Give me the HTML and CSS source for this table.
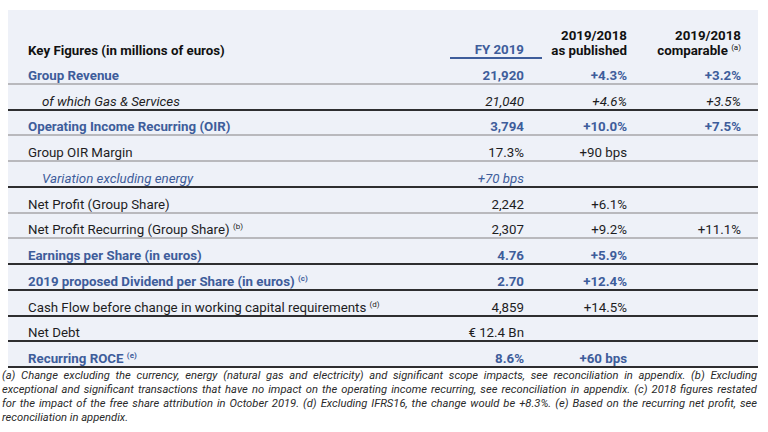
FILE: index.html
```html
<!DOCTYPE html>
<html lang="en">
<head>
<meta charset="utf-8">
<title>Key Figures</title>
<link rel="stylesheet" href="styles.css">
</head>
<body>
<div class="page">
  <div class="kf">
    <div class="row head">
      <div class="c lbl">Key Figures (in millions of euros)</div>
      <div class="c num fy">FY 2019</div>
      <div class="c num">2019/2018<br>as published</div>
      <div class="c num">2019/2018<br>comparable <sup>(a)</sup></div>
    </div>
    <div class="row blue b grey">
      <div class="c lbl">Group Revenue</div>
      <div class="c num">21,920</div>
      <div class="c num">+4.3%</div>
      <div class="c num">+3.2%</div>
    </div>
    <div class="row it dark">
      <div class="c lbl sub">of which Gas &amp; Services</div>
      <div class="c num">21,040</div>
      <div class="c num">+4.6%</div>
      <div class="c num">+3.5%</div>
    </div>
    <div class="row blue b grey">
      <div class="c lbl">Operating Income Recurring (OIR)</div>
      <div class="c num">3,794</div>
      <div class="c num">+10.0%</div>
      <div class="c num">+7.5%</div>
    </div>
    <div class="row grey">
      <div class="c lbl">Group OIR Margin</div>
      <div class="c num">17.3%</div>
      <div class="c num">+90 bps</div>
      <div class="c num"></div>
    </div>
    <div class="row blue it dark">
      <div class="c lbl sub">Variation excluding energy</div>
      <div class="c num">+70 bps</div>
      <div class="c num"></div>
      <div class="c num"></div>
    </div>
    <div class="row grey">
      <div class="c lbl">Net Profit (Group Share)</div>
      <div class="c num">2,242</div>
      <div class="c num">+6.1%</div>
      <div class="c num"></div>
    </div>
    <div class="row grey">
      <div class="c lbl">Net Profit Recurring (Group Share) <sup>(b)</sup></div>
      <div class="c num">2,307</div>
      <div class="c num">+9.2%</div>
      <div class="c num">+11.1%</div>
    </div>
    <div class="row blue b dark">
      <div class="c lbl">Earnings per Share (in euros)</div>
      <div class="c num">4.76</div>
      <div class="c num">+5.9%</div>
      <div class="c num"></div>
    </div>
    <div class="row blue b dark">
      <div class="c lbl">2019 proposed Dividend per Share (in euros) <sup>(c)</sup></div>
      <div class="c num">2.70</div>
      <div class="c num">+12.4%</div>
      <div class="c num"></div>
    </div>
    <div class="row dark">
      <div class="c lbl">Cash Flow before change in working capital requirements <sup>(d)</sup></div>
      <div class="c num">4,859</div>
      <div class="c num">+14.5%</div>
      <div class="c num"></div>
    </div>
    <div class="row dark">
      <div class="c lbl">Net Debt</div>
      <div class="c num">€ 12.4 Bn</div>
      <div class="c num"></div>
      <div class="c num"></div>
    </div>
    <div class="row blue b dark">
      <div class="c lbl">Recurring ROCE <sup>(e)</sup></div>
      <div class="c num">8.6%</div>
      <div class="c num">+60 bps</div>
      <div class="c num"></div>
    </div>
  </div>
  <div class="notes">
    <span class="ln">(a) Change excluding the currency, energy (natural gas and electricity) and significant scope impacts, see reconciliation in appendix. (b) Excluding</span>
    <span class="ln">exceptional and significant transactions that have no impact on the operating income recurring, see reconciliation in appendix. (c) 2018 figures restated</span>
    <span class="ln">for the impact of the free share attribution in October 2019. (d) Excluding IFRS16, the change would be +8.3%. (e) Based on the recurring net profit, see</span>
    <span class="ln last">reconciliation in appendix.</span>
  </div>
</div>
</body>
</html>
```
FILE: styles.css
```css
* { box-sizing: border-box; }
html, body { margin: 0; padding: 0; background: #ffffff; }
body { font-family: Roboto, "Liberation Sans", sans-serif; color: #1d1d1f; }
.page { padding: 10px 10px 0 2px; }
.kf { margin-left: 6px; width: 750px; background: #eef1f8; }
.row {
  display: grid;
  grid-template-columns: 442px 92px 103px 113px;
  align-items: end;
  height: 25.75px;
  font-size: 13.3px;
  line-height: 14px;
  border-bottom: 2px solid #b9b9bd;
}
.row.dark { border-bottom-color: #2e2e30; }
.row.head {
  height: 49px;
  line-height: 15px;
  border-bottom: 0;
  font-weight: 700;
  color: #111;
}
.c { white-space: nowrap; }
.lbl { padding-left: 20px; }
.lbl.sub { padding-left: 34px; }
.num { text-align: right; padding-right: 18px; }
.num:last-child { padding-right: 17px; }
.head .c { padding-bottom: 1px; }
.head .fy {
  color: #3e5d9b;
  border-bottom: 2px solid #3e5d9b;
  padding-bottom: 0;
}
.blue { color: #3e5d9b; }
.b { font-weight: 700; }
.it { font-style: italic; }
sup {
  font-size: 8px;
  line-height: 0;
  vertical-align: 5px;
  font-weight: 400;
}
.b sup { font-weight: 700; }
.notes {
  font-size: 11.2px;
  line-height: 14px;
  font-style: italic;
  color: #2a2a2a;
  width: 755px;
  padding-top: 1px;
}
.ln { display: block; white-space: nowrap; text-align: justify; text-align-last: justify; }
.ln.last { text-align-last: left; }
```
